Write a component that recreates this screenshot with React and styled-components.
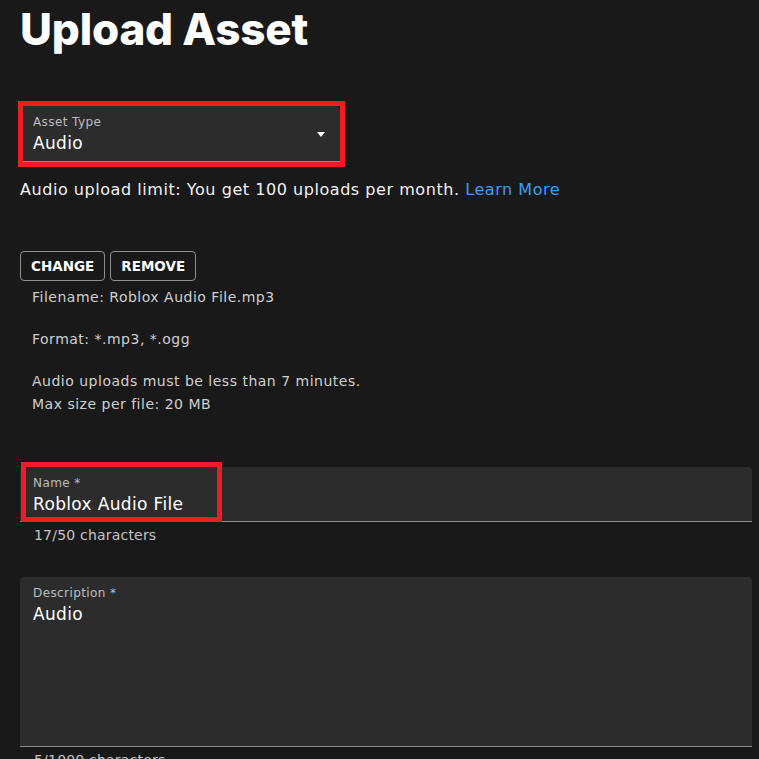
import React from "react";
import styled, { createGlobalStyle } from "styled-components";

const Global = createGlobalStyle`
  html, body { margin: 0; padding: 0; background: #191919; }
  body { font-family: "DejaVu Sans", Inter, sans-serif; color: #fff; overflow: hidden; }
  * { box-sizing: border-box; }
`;

const Page = styled.div`
  width: 759px;
  height: 759px;
  padding: 0 7px 0 20px;
  display: flex;
  flex-direction: column;
`;

const Title = styled.h1`
  margin: 0;
  padding-top: 4px;
  font-family: Inter, "Noto Sans", sans-serif;
  font-size: 44px;
  line-height: 50px;
  font-weight: 800;
  letter-spacing: -0.2px;
  color: #fff;
`;

const FieldWrap = styled.div`
  position: relative;
  width: ${(p) => p.$width || "100%"};
  margin-top: ${(p) => p.$mt || 0}px;
`;

const Field = styled.div`
  position: relative;
  background: #2c2c2c;
  border-radius: 4px 4px 0 0;
  border-bottom: 1px solid #8b8b8b;
  height: ${(p) => p.$h}px;
  padding: 9px 13px 0;
`;

const Label = styled.div`
  font-size: 12px;
  line-height: 14px;
  letter-spacing: 0.4px;
  color: #bdbdbd;
`;

const Value = styled.div`
  margin-top: 4px;
  font-size: 17px;
  line-height: 20px;
  letter-spacing: 0.35px;
  color: #fff;
`;

const Caret = styled.div`
  position: absolute;
  right: 15px;
  top: 26px;
  width: 0;
  height: 0;
  border-left: 4px solid transparent;
  border-right: 4px solid transparent;
  border-top: 5px solid #fff;
`;

const Highlight = styled.div`
  position: absolute;
  top: ${(p) => p.$t}px;
  left: ${(p) => p.$l}px;
  width: ${(p) => p.$w}px;
  height: ${(p) => p.$hh}px;
  border: 5px solid #ee1c25;
  pointer-events: none;
`;

const Limit = styled.p`
  margin: 18px 0 0;
  font-size: 16px;
  line-height: 20px;
  letter-spacing: 0.55px;
  color: #f2f2f2;
`;

const Link = styled.a`
  color: #3a9ff0;
  text-decoration: none;
`;

const ButtonRow = styled.div`
  display: flex;
  gap: 5px;
  margin-top: 51px;
`;

const Button = styled.button`
  height: 30px;
  padding: 0 10px;
  background: transparent;
  border: 1px solid #8f8f8f;
  border-radius: 4px;
  color: #fff;
  font-family: inherit;
  font-size: 13.5px;
  font-weight: 700;
  letter-spacing: 0;
  text-transform: uppercase;
`;

const Info = styled.div`
  padding-left: 12px;
  margin-top: 5px;
`;

const InfoLine = styled.p`
  margin: 0 0 ${(p) => p.$mb || 0}px;
  font-size: 14px;
  line-height: 23px;
  letter-spacing: 0.5px;
  color: #cfcfcf;
`;

const Counter = styled.div`
  padding-left: 14px;
  margin-top: 4px;
  font-size: 14px;
  line-height: 18px;
  letter-spacing: 0.2px;
  color: #c4c4c4;
`;

export default function App() {
  return (
    <Page>
      <Global />
      <Title>Upload Asset</Title>

      <FieldWrap $width="320px" $mt={52}>
        <Field $h={56}>
          <Label>Asset Type</Label>
          <Value>Audio</Value>
          <Caret />
        </Field>
        <Highlight $t={-5} $l={-2} $w={327} $hh={66} />
      </FieldWrap>

      <Limit>
        Audio upload limit: You get 100 uploads per month. <Link href="#">Learn More</Link>
      </Limit>

      <ButtonRow>
        <Button>Change</Button>
        <Button>Remove</Button>
      </ButtonRow>

      <Info>
        <InfoLine $mb={19}>Filename: Roblox Audio File.mp3</InfoLine>
        <InfoLine $mb={19}>Format: *.mp3, *.ogg</InfoLine>
        <InfoLine>Audio uploads must be less than 7 minutes.</InfoLine>
        <InfoLine>Max size per file: 20 MB</InfoLine>
      </Info>

      <FieldWrap $mt={51}>
        <Field $h={55}>
          <Label>Name *</Label>
          <Value>Roblox Audio File</Value>
        </Field>
        <Highlight $t={-5} $l={1} $w={201} $hh={60} />
      </FieldWrap>
      <Counter>17/50 characters</Counter>

      <FieldWrap $mt={33}>
        <Field $h={170}>
          <Label>Description *</Label>
          <Value>Audio</Value>
        </Field>
      </FieldWrap>
      <Counter>5/1000 characters</Counter>
    </Page>
  );
}
